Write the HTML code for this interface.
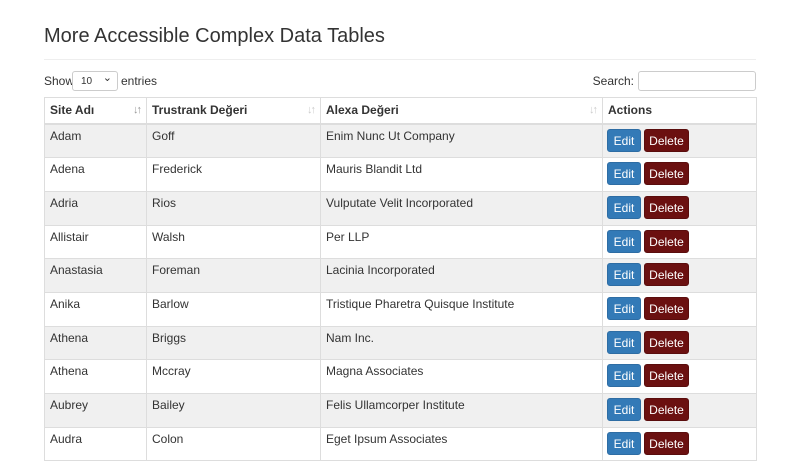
<!DOCTYPE html>
<html><head><meta charset="utf-8"><style>
body{margin:0;background:#fff;font-family:"Liberation Sans",sans-serif;font-size:12px;color:#333;width:800px;height:450px;overflow:hidden;position:relative}
h1{position:absolute;left:44px;top:22px;margin:0;font-weight:normal;font-size:20px;line-height:28px;color:#333}
.hr{position:absolute;left:44px;top:59px;width:712px;border-top:1px solid #eee}
.show{position:absolute;left:44px;top:71px;line-height:20px}
.sel{position:absolute;left:28px;top:0;width:46px;height:20px;border:1px solid #ccc;border-radius:3px;font-size:10px;line-height:20px;box-sizing:border-box;padding-left:8px;background:#fff}
.sel:after{content:"⌄";position:absolute;right:5px;top:-4px;font-size:11px}
.ent{position:absolute;left:77px;top:0}
.slabel{position:absolute;right:166px;top:71px;line-height:20px}
.sbox{position:absolute;left:638px;top:71px;width:118px;height:20px;border:1px solid #ccc;border-radius:3px;box-sizing:border-box}
table{position:absolute;left:44px;top:97px;width:712px;border-collapse:collapse;table-layout:fixed}
td,th{border:1px solid #ddd;padding:0 5px;text-align:left;vertical-align:top}
th{height:25px;border-bottom:2px solid #ddd;font-weight:bold;line-height:25px;position:relative}
td{height:33.7px;line-height:20px;padding-top:1px;box-sizing:border-box}
tr.o td{background:#f0f0f0}
.s{position:absolute;right:6px;top:0;color:#ccc;font-size:11px;letter-spacing:-2px}
.s.a{color:#999}
.b{display:inline-block;height:23px;line-height:22px;color:#fff;border-radius:3px;margin-top:3px;box-sizing:border-box;text-align:center;font-size:12px;vertical-align:top}
.e{background:#337ab7;border:1px solid #2e6da4;width:34px}
.d{background:#6b1010;border:1px solid #5a0d0d;margin-left:3px;width:45px}
td:last-child{padding-left:4px}
</style></head><body>
<h1>More Accessible Complex Data Tables</h1>
<div class="hr"></div>
<div class="show">Show<span class="sel">10</span><span class="ent">entries</span></div>
<div class="slabel">Search:</div><div class="sbox"></div>
<table>
<colgroup><col style="width:102px"><col style="width:174px"><col style="width:282px"><col style="width:154px"></colgroup>
<tr><th>Site Adı<span class="s a">↓↑</span></th><th>Trustrank Değeri<span class="s">↓↑</span></th><th>Alexa Değeri<span class="s">↓↑</span></th><th>Actions</th></tr>
<tr class="o"><td>Adam</td><td>Goff</td><td>Enim Nunc Ut Company</td><td><span class="b e">Edit</span><span class="b d">Delete</span></td></tr>
<tr><td>Adena</td><td>Frederick</td><td>Mauris Blandit Ltd</td><td><span class="b e">Edit</span><span class="b d">Delete</span></td></tr>
<tr class="o"><td>Adria</td><td>Rios</td><td>Vulputate Velit Incorporated</td><td><span class="b e">Edit</span><span class="b d">Delete</span></td></tr>
<tr><td>Allistair</td><td>Walsh</td><td>Per LLP</td><td><span class="b e">Edit</span><span class="b d">Delete</span></td></tr>
<tr class="o"><td>Anastasia</td><td>Foreman</td><td>Lacinia Incorporated</td><td><span class="b e">Edit</span><span class="b d">Delete</span></td></tr>
<tr><td>Anika</td><td>Barlow</td><td>Tristique Pharetra Quisque Institute</td><td><span class="b e">Edit</span><span class="b d">Delete</span></td></tr>
<tr class="o"><td>Athena</td><td>Briggs</td><td>Nam Inc.</td><td><span class="b e">Edit</span><span class="b d">Delete</span></td></tr>
<tr><td>Athena</td><td>Mccray</td><td>Magna Associates</td><td><span class="b e">Edit</span><span class="b d">Delete</span></td></tr>
<tr class="o"><td>Aubrey</td><td>Bailey</td><td>Felis Ullamcorper Institute</td><td><span class="b e">Edit</span><span class="b d">Delete</span></td></tr>
<tr><td>Audra</td><td>Colon</td><td>Eget Ipsum Associates</td><td><span class="b e">Edit</span><span class="b d">Delete</span></td></tr>
</table>
</body></html>
